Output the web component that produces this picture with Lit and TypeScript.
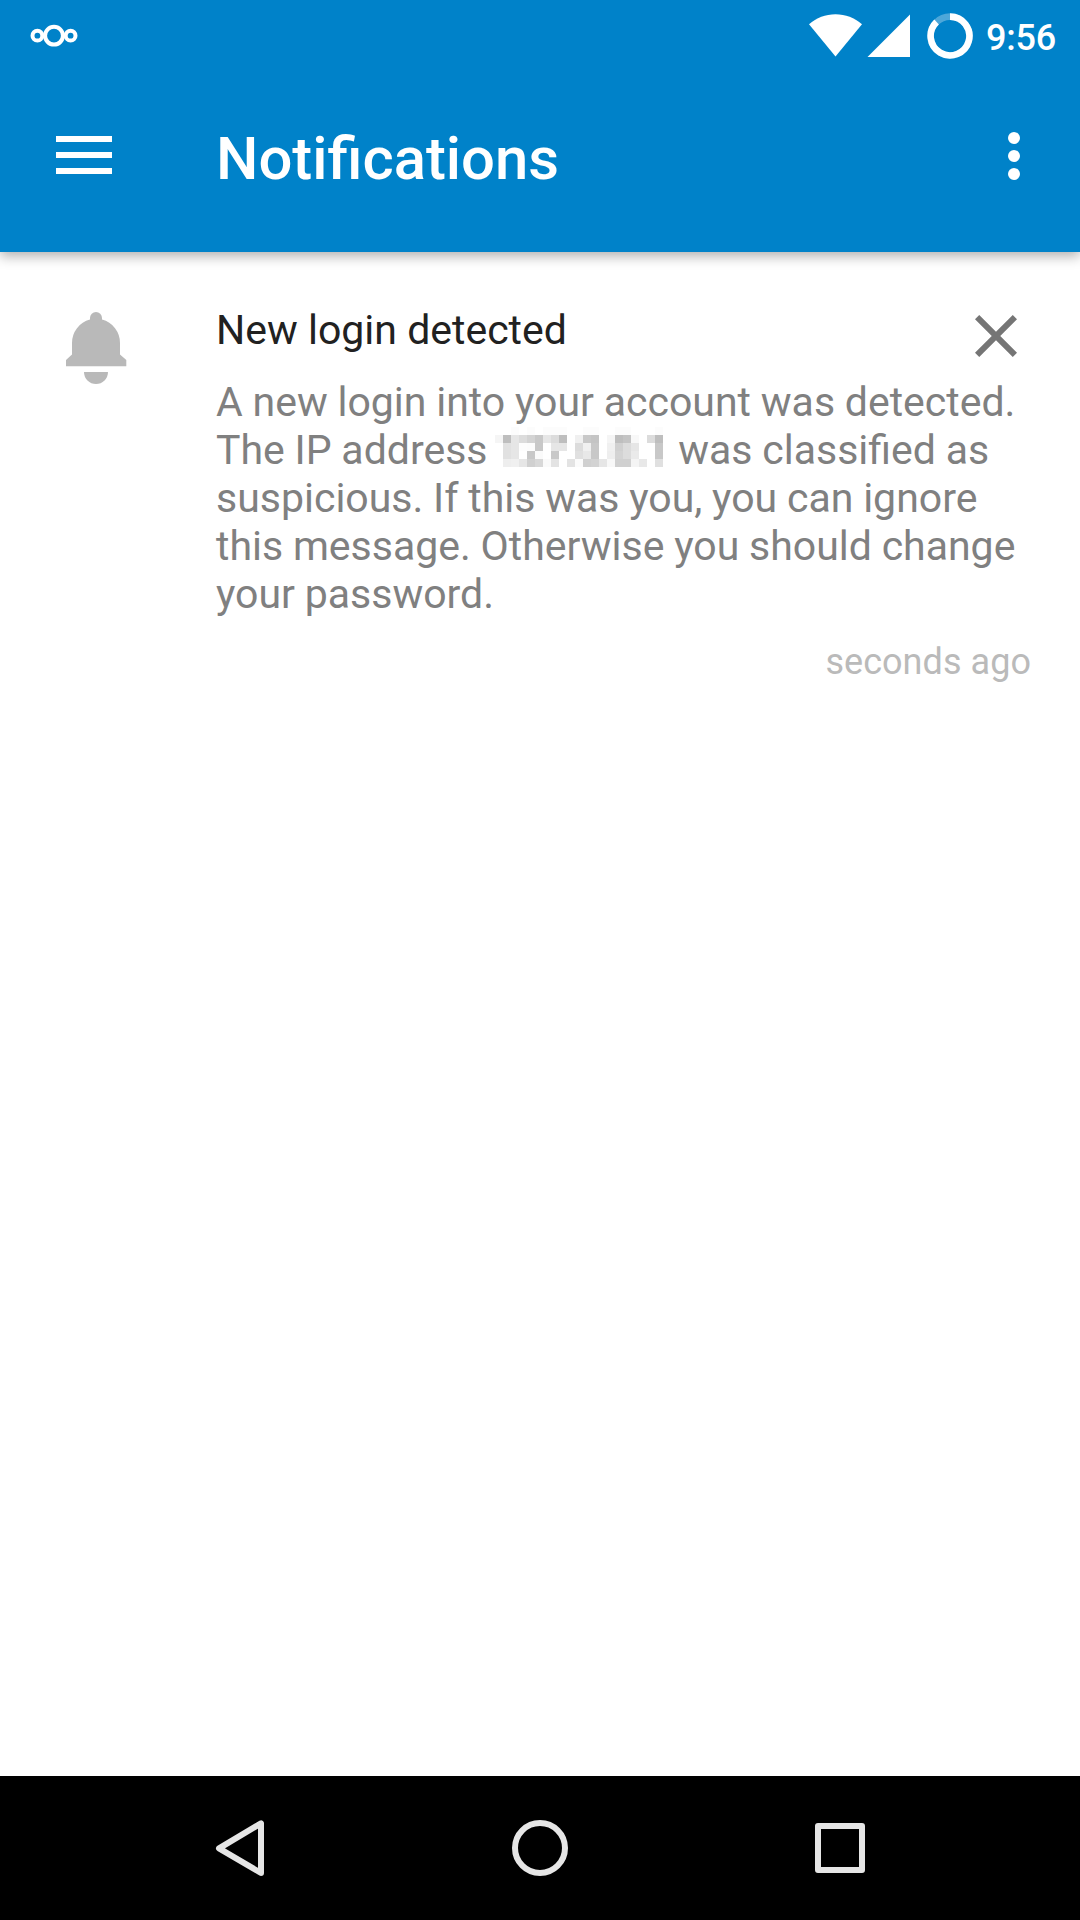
import { LitElement, html, svg, css } from "lit";
import { customElement } from "lit/decorators.js";

const CELL = 8;

// Grey level of each mosaic cell, one hex pair per cell, row by row.
const MOSAIC_ROWS = [
  "fffffcfffcfffcfcfcfffffcfcfffffcfcfffffffc",
  "f5bee6dcd3c8e6dcbefff0c8c4fff5bec4f8ffdcbe",
  "ffe1e6fdfcc8ffe6e6ffdcf0c8fff0d0dce6ffffc8",
  "ffe1e6ffc8faffc8ffffe0e8c8ffeed3dceaffffc8",
  "ffeef0e6d0d8fae3ffe3fbd0d3e6f8d0d0f4e8ffe0",
];

@customElement("redacted-text")
export class RedactedText extends LitElement {
  static styles = css`
    :host { display: inline-block; width: 168px; height: 40px; vertical-align: -3px; }
    svg { display: block; }
  `;
  render() {
    return html`<svg width="168" height="40" viewBox="0 0 168 40" shape-rendering="crispEdges">
      ${MOSAIC_ROWS.map((row, y) =>
        (row.match(/../g) ?? []).map(
          (v, x) => svg`<rect x=${x * CELL} y=${y * CELL} width="8" height="8" fill=${"#" + v + v + v}></rect>`
        )
      )}
    </svg>`;
  }
}

@customElement("status-bar")
export class StatusBar extends LitElement {
  static styles = css`
    :host {
      display: flex; justify-content: space-between; height: 72px; box-sizing: border-box;
      padding: 0 24px 0 30px; color: #fff;
    }
    .right { display: flex; }
    .time { font-size: 36px; font-weight: 500; line-height: 42px; padding-top: 17px; margin-left: 12px; letter-spacing: -0.2px; }
    svg { display: block; }
  `;
  render() {
    return html`
      <svg width="48" height="72" viewBox="30 0 48 72" fill="none" stroke="#fff">
        <circle cx="54" cy="35.7" r="8.9" stroke-width="4"></circle>
        <circle cx="37.4" cy="35.7" r="4.9" stroke-width="4"></circle>
        <circle cx="70.6" cy="35.7" r="4.9" stroke-width="4"></circle>
      </svg>
      <div class="right">
        <svg width="166" height="72" viewBox="808 0 166 72" fill="#fff">
          <path d="M835.5 56.5 L809 24.2 C816.5 17.8 825.5 14.2 835.5 14.2 S854.5 17.8 862 24.2Z"></path>
          <path d="M867.5 57 H910 V14.5Z"></path>
          <circle cx="950" cy="36" r="19.4" fill="none" stroke="#fff" stroke-opacity=".3" stroke-width="6.6"></circle>
          <path d="M950 16.6 A19.4 19.4 0 1 1 936.6 22" fill="none" stroke="#fff" stroke-width="6.6"></path>
        </svg>
        <div class="time">9:56</div>
      </div>
    `;
  }
}

@customElement("app-toolbar")
export class AppToolbar extends LitElement {
  static styles = css`
    :host {
      display: flex; align-items: flex-start; height: 180px; box-sizing: border-box;
      padding: 48px 60px 0 56px; color: #fff;
    }
    h1 {
      flex: 1; margin: 4px 0 0 104px; font-size: 59.8px; font-weight: 500; line-height: 70px;
    }
    svg { display: block; margin-top: 12px; }
  `;
  render() {
    return html`
      <svg width="56" height="46" viewBox="0 0 56 46" fill="#fff">
        <path d="M0 4h56v6H0zM0 20h56v6H0zM0 36h56v6H0z"></path>
      </svg>
      <h1>Notifications</h1>
      <svg width="12" height="48" viewBox="0 0 12 48" fill="#fff">
        <circle cx="6" cy="6" r="6"></circle>
        <circle cx="6" cy="24" r="6"></circle>
        <circle cx="6" cy="42" r="6"></circle>
      </svg>
    `;
  }
}

@customElement("notification-card")
export class NotificationCard extends LitElement {
  static styles = css`
    :host { display: flex; align-items: flex-start; padding: 54px 49px 0 66px; }
    .bell { margin: 6px 89px 0 0; flex: none; }
    .content { flex: 1; }
    .head { display: flex; justify-content: space-between; height: 72px; }
    h2 { margin: 0; font-size: 41px; font-weight: 400; line-height: 48px; color: #212121; }
    .close { margin: 9px 14px 0 0; }
    p { margin: 0; font-size: 41px; line-height: 48px; word-spacing: -0.4px; color: #808080; white-space: nowrap; }
    .masked { margin: 0 5px 0 8px; }
    time { display: block; text-align: right; margin-top: 23px; font-size: 36px; line-height: 42px; letter-spacing: 0.05px; color: #bababa; }
    svg { display: block; }
  `;
  render() {
    return html`
      <svg class="bell" width="61" height="72" viewBox="66 312 61 72" fill="#b9b9b9">
        <path d="M90 319.6V318a6 6 0 0 1 12 0v1.6A24 24 0 0 1 120 343v11.5l6.3 5.5v6.3H66V360l6-5.5V343A24 24 0 0 1 90 319.6Z"></path>
        <path d="M84 372h24a12 12 0 0 1-24 0Z"></path>
      </svg>
      <div class="content">
        <div class="head">
          <h2>New login detected</h2>
          <svg class="close" width="42" height="42" viewBox="5 5 14 14" fill="#757575">
            <path d="M19 6.41 17.59 5 12 10.59 6.41 5 5 6.41 10.59 12 5 17.59 6.41 19 12 13.41 17.59 19 19 17.59 13.41 12Z"></path>
          </svg>
        </div>
        <p>A new login into your account was detected.<br />The IP address<redacted-text class="masked"></redacted-text>
          was classified as<br />suspicious. If this was you, you can ignore<br />this message. Otherwise you should change<br />your password.</p>
        <time>seconds ago</time>
      </div>
    `;
  }
}

@customElement("nav-bar")
export class NavBar extends LitElement {
  static styles = css`
    :host { display: flex; justify-content: center; align-items: center; gap: 240px; height: 144px; background: #000; }
    svg { display: block; fill: none; stroke: #e6e6e6; stroke-width: 6; stroke-linejoin: round; }
  `;
  render() {
    return html`
      <svg width="60" height="60" viewBox="210 1818 60 60"><path d="M219 1848.3 261 1823.3V1873Z"></path></svg>
      <svg width="60" height="60"><circle cx="30" cy="30" r="25"></circle></svg>
      <svg width="60" height="60"><rect x="8" y="8" width="44" height="44"></rect></svg>
    `;
  }
}

@customElement("app-root")
export class AppRoot extends LitElement {
  static styles = css`
    :host {
      display: flex; flex-direction: column; height: 1920px; width: 1080px; overflow: hidden;
      background: #fff; font-family: Roboto, sans-serif;
    }
    header { flex: none; background: #0082c9; box-shadow: 0 4px 12px rgba(0, 0, 0, 0.32); }
    main { flex: 1; }
    nav-bar { flex: none; }
  `;
  render() {
    return html`
      <header><status-bar></status-bar><app-toolbar></app-toolbar></header>
      <main><notification-card></notification-card></main>
      <nav-bar></nav-bar>
    `;
  }
}
